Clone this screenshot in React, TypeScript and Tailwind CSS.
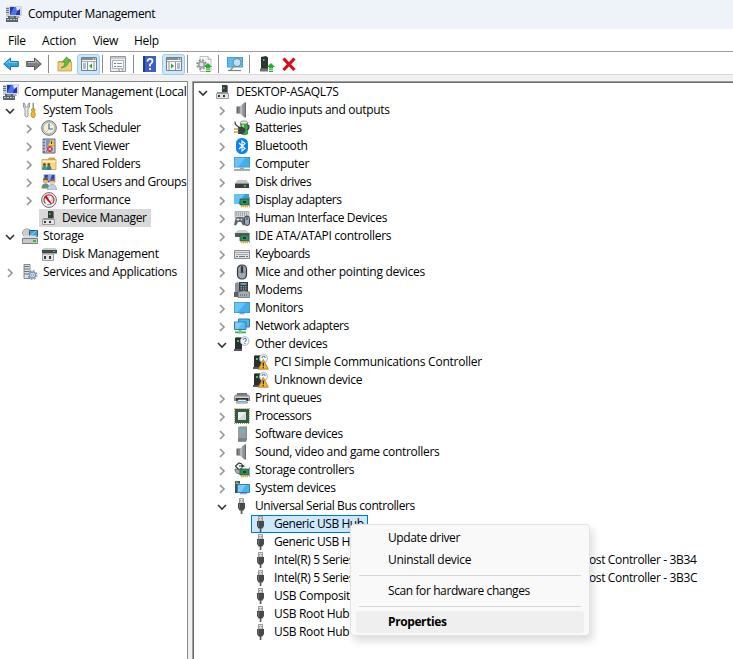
import type { ReactNode } from "react";

/* ---------- icons, all on a 16px grid ---------- */

function Svg({ children }: { children: ReactNode }) {
  return (
    <svg width="16" height="16" viewBox="0 0 16 16" className="block shrink-0">
      {children}
    </svg>
  );
}

function ComputerMgmtIcon() {
  return (
    <Svg>
      <path d="M0 1h4v10H0z" fill="#c9cdd1" />
      <path d="M0 2.5h3M0 4.5h3M0 6.5h3" stroke="#6b7176" />
      <path d="M3 0h13v10H3z" fill="#d3d5d8" />
      <path d="M4 1h10v8H4z" fill="#1f35b8" />
      <path d="M4 9l4-8h4l-2 8z" fill="#4f74e8" />
      <path d="M10 1h4v2l-3 2z" fill="#dfe8fc" />
      <path d="M8 10h5l1 2H7z" fill="#a9adb1" />
      <path d="M2 10h8v2H2zM0 12h12v4H0z" fill="#56666a" />
      <path d="M1 13.5h10" stroke="#c3cccc" strokeDasharray="2 1" />
      <path d="M4 11h4" stroke="#aab4b5" />
    </Svg>
  );
}

function ToolsIcon() {
  return (
    <Svg>
      <path d="M1.500 1v4l1.500 2v7q1.500 2 3 0V7l1.500-2V1L6 2v3H3V2z" fill="#e8eaec" stroke="#7b8288" strokeWidth=".8" />
      <path d="M10.500 1h1.500v6h-1.500z" fill="#8d9398" />
      <path d="M9.500 7h3.500v2h-.8v1l1 1v3l-1 1.500H10L9 14v-3l1.200-1V9h-.7z" fill="#f0b429" stroke="#b67b0a" strokeWidth=".6" />
    </Svg>
  );
}

function ClockIcon() {
  return (
    <Svg>
      <circle cx="8" cy="8" r="7.300" fill="#d5d6d6" stroke="#6e7276" strokeWidth="1" />
      <circle cx="8" cy="8" r="5.700" fill="#f6efda" stroke="#a9a9a5" strokeWidth=".8" />
      <path d="M8 3.500V9h4" fill="none" stroke="#3d6fa8" strokeWidth="1.200" />
      <path d="M8 9l-3 3" stroke="#c9b98a" strokeWidth=".8" />
    </Svg>
  );
}

function EventIcon() {
  return (
    <Svg>
      <path d="M2 1h12v14H2z" fill="#bccbe4" stroke="#5d6676" />
      <path d="M2 1h2v14H2z" fill="#6b7688" />
      <path d="M1 3h3M1 6h3M1 9h3M1 12h3" stroke="#d8dde5" />
      <path d="M5 3h4M5 5h3M5 7h2M5 9h1M5 13h1" stroke="#2f5fae" />
      <path d="M10.500 1.500l3.500 6H7z" fill="#ffd21f" stroke="#b58a00" strokeWidth=".5" />
      <path d="M10.500 3.500v2.500" stroke="#222" />
      <circle cx="8.800" cy="11" r="3" fill="#d9333f" />
      <path d="M7.500 9.700l2.600 2.600m0-2.600l-2.600 2.600" stroke="#fff" strokeWidth=".9" />
    </Svg>
  );
}

function SharedIcon() {
  return (
    <Svg>
      <path d="M7 3l1-1.500h6V4H7z" fill="#d7a63a" />
      <path d="M1 3.500h14v10H1z" fill="#f6dc8a" stroke="#c69a35" strokeWidth=".7" />
      <path d="M1.500 5.500h13" stroke="#fff2bd" />
      <circle cx="3.500" cy="8.500" r="1.500" fill="#6b4a2a" />
      <circle cx="7.800" cy="8.500" r="1.500" fill="#6b4a2a" />
      <path d="M1 14q0-4.500 2.500-4.500T6 14z" fill="#3c9a8f" />
      <path d="M5.500 14q0-4.500 2.500-4.500t2.500 4.500z" fill="#3a7a96" />
    </Svg>
  );
}

function UsersIcon() {
  return (
    <Svg>
      <path d="M3 .5h11v8H3z" fill="#2443c4" stroke="#b9bec9" />
      <path d="M7 1h4L9 7H6z" fill="#86a4f4" />
      <circle cx="4.500" cy="7" r="2.600" fill="#e3b98a" />
      <path d="M2 6.500q0-3 2.500-3T7 6.500q-3-1-5 0z" fill="#7b5a20" />
      <circle cx="11" cy="8" r="2.600" fill="#f0cda4" />
      <path d="M8.500 7.500q0-3 2.500-3t2.500 3q-3-1-5 0z" fill="#8a6a2a" />
      <path d="M.5 14.500q0-5 4-5t4 5z" fill="#5a9479" />
      <path d="M6.500 16q0-5.500 4.500-5.500t4.500 5.500z" fill="#c3d2e6" stroke="#6f86a8" strokeWidth=".5" />
    </Svg>
  );
}

function PerfIcon() {
  return (
    <Svg>
      <circle cx="8" cy="8" r="7.400" fill="#f3f3f3" stroke="#63686c" strokeWidth="1" />
      <path d="M4.500 11.500a5 5 0 1 1 7 0" fill="#fff" stroke="#c4272f" strokeWidth="1.200" />
      <path d="M5 4l5.500 8L4 5z" fill="#b81c25" stroke="#b81c25" strokeWidth="1.200" />
      <path d="M8 4.500V6M11 5.500v4" stroke="#8a8a8a" strokeWidth=".8" />
      <path d="M6 12.500h4" stroke="#9a9a9a" />
    </Svg>
  );
}

function DeviceIcon() {
  return (
    <Svg>
      <path d="M7 1h5v8H7z" fill="#383b3e" />
      <path d="M8 3h1.500v2H8z" fill="#32c24d" />
      <path d="M12 1.500h1V9h-1z" fill="#777b7e" />
      <path d="M2 8h11v1H2z" fill="#8d9194" />
      <path d="M1.500 9.500h12v5h-12z" fill="#e4e5e6" stroke="#9a9ea1" />
      <path d="M3 11h2v2H3zM8 11h2v2H8z" fill="#33363a" />
    </Svg>
  );
}

function StorageIcon() {
  return (
    <Svg>
      <ellipse cx="5" cy="5" rx="4.500" ry="4.200" fill="#cfd2d4" stroke="#85898c" strokeWidth=".7" />
      <circle cx="5" cy="5" r="1.200" fill="#fff" stroke="#888" strokeWidth=".5" />
      <path d="M7.500 2.500h8v6h-8z" fill="#35a6e0" stroke="#39566b" />
      <path d="M8 8l6-5" stroke="#8ad3f7" />
      <path d="M2 7.500h12l1.500 3H.5z" fill="#dadcde" />
      <path d="M.5 10.500h15v5H.5z" fill="#c6c9cb" stroke="#66696c" strokeWidth=".8" />
      <path d="M11 12h3v2h-3z" fill="#31c32d" />
    </Svg>
  );
}

function DiskMgmtIcon() {
  return (
    <Svg>
      <path d="M3 2h12l1 2H1z" fill="#c8cacc" />
      <path d="M1 4h15v3.500H1z" fill="#44484b" />
      <path d="M12 5h2v1h-2z" fill="#3ad04c" />
      <path d="M1.500 8h11v6.500h-11z" fill="#e6e7e8" stroke="#9a9ea1" />
      <path d="M3 10h2v3H3zM8 10h2v3H8z" fill="#33363a" />
    </Svg>
  );
}

function ServicesIcon() {
  return (
    <Svg>
      <path d="M2 .5h6v14H2z" fill="#d9e0e6" stroke="#66737d" strokeWidth=".8" />
      <path d="M2 2.500h5M2 5h5M2 7.500h5M2 10h4" stroke="#66737d" />
      <circle cx="10.500" cy="11" r="4.300" fill="none" stroke="#7697b5" strokeWidth="1.300" strokeDasharray="1.700 1.680" />
      <circle cx="10.500" cy="11" r="3" fill="#e8f0f8" stroke="#7697b5" strokeWidth="1.300" />
      <circle cx="10.500" cy="11" r="1.100" fill="#fff" stroke="#54779a" strokeWidth=".7" />
    </Svg>
  );
}

function SpeakerIcon() {
  return (
    <Svg>
      <path d="M2.500 4.500H6v7H2.500z" fill="#5e6266" />
      <path d="M4.500 4.500h1v7h-1z" fill="#a8acaf" />
      <path d="M6 4.500L10.500.500v15L6 11.500z" fill="#b4b8bb" />
      <path d="M8.500 2.500L10.500.500v15l-2-2z" fill="#8d9296" />
      <path d="M10.500.500h1.500v15h-1.500z" fill="#65696d" />
    </Svg>
  );
}

function BatteryIcon() {
  return (
    <Svg>
      <path d="M6.500 2.500h7V14q-3 1.500-6 0z" fill="#2fae3b" stroke="#2b6e2f" strokeWidth=".7" />
      <ellipse cx="10" cy="2.500" rx="3.800" ry="1.600" fill="#e6e8e6" stroke="#777" strokeWidth=".7" />
      <path d="M8 4.500h2v5H8z" fill="#8ee58a" />
      <path d="M13.500 5q3 1 0 5" fill="none" stroke="#39423a" strokeWidth="1.400" />
      <path d="M1 1.500q0 4.500 4.500 5.500" fill="none" stroke="#39423a" strokeWidth="1.200" />
      <path d="M4 7h5l2.500 2v2L9 14H4z" fill="#3e4144" />
      <path d="M0 9h4.500M0 12h4.500" stroke="#caa33a" strokeWidth="1.300" />
    </Svg>
  );
}

function BluetoothIcon() {
  return (
    <Svg>
      <rect x="2" y="0" width="12" height="16" rx="5.500" fill="#0a84f5" />
      <path d="M5 5l6 5.500L8 13V3l3 2.500L5 11" fill="none" stroke="#fff" strokeWidth="1.100" />
    </Svg>
  );
}

function MonitorIcon() {
  return (
    <Svg>
      <path d="M0 2h16v11H0z" fill="#3b8fc2" />
      <path d="M.7 2.700h14.600v9.600H.7z" fill="#41aef0" />
      <path d="M.7 2.700h11L4 12.300H.7z" fill="#68c3f7" />
      <path d="M5.500 13h5v1.300h-5z" fill="#9ba3a8" />
    </Svg>
  );
}

function ComputerIcon() {
  return (
    <Svg>
      <path d="M0 1h16v10.500H0z" fill="#3b8fc2" />
      <path d="M.7 1.700h14.600v9.100H.7z" fill="#41aef0" />
      <path d="M.7 1.700h11L4 10.800H.7z" fill="#68c3f7" />
      <path d="M6 11.500h4V13H6z" fill="#9ba3a8" />
      <path d="M0 14h16" stroke="#6f777d" strokeWidth="1.200" />
    </Svg>
  );
}

function DriveIcon() {
  return (
    <Svg>
      <path d="M3.500 6h9L15 9.500H1z" fill="#c2c5c7" />
      <path d="M1 9.500h14V14H1z" fill="#3c3f42" />
      <path d="M10 12h2" stroke="#42db57" strokeWidth="1.500" />
    </Svg>
  );
}

function Board() {
  return (
    <g>
      <path d="M6 7h9v6H6z" fill="#2f8f5c" stroke="#1d5a3c" strokeWidth=".8" />
      <path d="M9 9h3v2H9z" fill="#153c2b" />
      <path d="M7 14.300h7" stroke="#e0a32b" strokeWidth="2" strokeDasharray="1.500 .5" />
      <path d="M15.500 5v10" stroke="#9ea4a8" />
    </g>
  );
}

function DisplayIcon() {
  return (
    <Svg>
      <path d="M0 2h15v10H0z" fill="#3a9fdf" />
      <path d="M0 2h11L4 12H0z" fill="#67c2f6" />
      <Board />
    </Svg>
  );
}

function HidIcon() {
  return (
    <Svg>
      <path d="M1 1.500h14v6H1z" fill="#cfd3d6" stroke="#9a9fa3" strokeWidth=".7" />
      <path d="M2 3h12M2 5h12" stroke="#7b8186" strokeDasharray="1 1" />
      <path d="M0 15l1.500-7 2-1h5l1.500 1 1 7-2 .5-2-3.500H4l-2 3.500z" fill="#5f686f" />
      <path d="M2.500 9.500h3M4 8v3" stroke="#d5dade" />
      <circle cx="7.500" cy="9.500" r="1" fill="#cbd3d8" />
      <rect x="10.500" y="6" width="5" height="9.500" rx="2.500" fill="#9aa9b5" stroke="#38424a" />
      <path d="M13 6.500V10" stroke="#38424a" />
    </Svg>
  );
}

function IdeIcon() {
  return (
    <Svg>
      <path d="M4 2h8l3 3H1z" fill="#cfd1d3" />
      <path d="M1 5h14v4H1z" fill="#55595d" />
      <Board />
    </Svg>
  );
}

function KeyboardIcon() {
  return (
    <Svg>
      <path d="M.5 4.500h15v8H.5z" fill="#dfe2e4" stroke="#7b8186" strokeWidth=".9" />
      <path d="M1.500 6.500h13M2.500 8.500h12" stroke="#697077" strokeDasharray="1 1" />
      <path d="M2 10.500h2M5 10.500h6M12 10.500h2" stroke="#697077" />
    </Svg>
  );
}

function MouseIcon() {
  return (
    <Svg>
      <rect x="3.500" y="1" width="9" height="14" rx="4.300" fill="#9faab4" stroke="#32383d" strokeWidth="1.200" />
      <path d="M4 7.500q4 3 8 0" fill="none" stroke="#717c86" strokeWidth=".8" />
      <rect x="6.800" y="2" width="2.400" height="7" rx="1.200" fill="#343a40" />
    </Svg>
  );
}

function ModemIcon() {
  return (
    <Svg>
      <path d="M1 1l3-1 1 2v12H1z" fill="#8c9297" />
      <path d="M5 0h9v10H5z" fill="#363b40" />
      <path d="M6.500 2h6" stroke="#6fc2f0" strokeWidth="1.500" />
      <path d="M6.500 4.800h6M6.500 7h6" stroke="#b9c0c5" strokeDasharray="1.500 .8" />
      <path d="M0 10h4v5H0z" fill="#5a5f63" />
      <path d="M4 10q6-2.500 11.500 0v5.500H4z" fill="#a7adb2" stroke="#5d6267" strokeWidth=".7" />
      <path d="M6 13h8" stroke="#4b5055" strokeDasharray="1 1" />
    </Svg>
  );
}

function NetworkIcon() {
  return (
    <Svg>
      <path d="M4.500 1h11v8h-11z" fill="#4db6f2" stroke="#3479a5" />
      <path d="M.5 4h11.500v7.500H.5z" fill="#55bbf4" stroke="#3479a5" />
      <path d="M1 4.500h8L4 11H1z" fill="#7ccdfa" />
      <path d="M6 12v2M1 14.300h11" stroke="#3ab54a" strokeWidth="1.800" />
      <path d="M4.500 12.500h3.500v3H4.500z" fill="#6ed07a" />
    </Svg>
  );
}

function Tower() {
  return (
    <g>
      <path d="M1 2h7v11H1z" fill="#2c2f32" />
      <path d="M1.500 1h6v1h-6z" fill="#75797c" />
      <path d="M3 4h2v2H3z" fill="#35d04b" />
      <path d="M0 13h8v2H0z" fill="#54585b" />
    </g>
  );
}

function OtherIcon() {
  return (
    <Svg>
      <Tower />
      <circle cx="10.700" cy="5" r="4.300" fill="#f6f7f8" stroke="#a6abb0" strokeWidth=".9" />
      <path d="M9.200 4q.2-1.700 1.700-1.700T12.400 4q0 .8-1.500 1.600v.7M10.900 7v1" fill="none" stroke="#2878c8" />
    </Svg>
  );
}

function WarnIcon() {
  return (
    <Svg>
      <Tower />
      <circle cx="10.500" cy="4.500" r="4" fill="#f6f7f8" stroke="#a6abb0" strokeWidth=".9" />
      <path d="M9 4q.2-1.700 1.700-1.700T12.200 4" fill="none" stroke="#2878c8" />
      <path d="M10.300 5.500l5 9.700H5.300z" fill="#f9b529" stroke="#b3700b" strokeWidth=".8" />
      <path d="M10.300 8.500V12M10.300 12.800v1.400" stroke="#1d1d1d" strokeWidth="1.200" />
    </Svg>
  );
}

function PrinterIcon() {
  return (
    <Svg>
      <path d="M3 3h10v3H3z" fill="#6d7275" />
      <path d="M0 6.500L2 4.500h12l2 2V11H0z" fill="#85898c" />
      <path d="M1 6.500h14V8H1z" fill="#d0d3d5" />
      <path d="M2 8h12v3H2z" fill="#303336" />
      <path d="M4 9.500h8l1.500 3.500h-11z" fill="#e9f1f7" stroke="#51565a" strokeWidth=".7" />
      <path d="M4 11.500h8" stroke="#68acd6" />
    </Svg>
  );
}

function CpuIcon() {
  return (
    <Svg>
      <rect x=".6" y=".6" width="14.800" height="14.800" fill="none" stroke="#b89845" strokeWidth="1.200" strokeDasharray="1 1" />
      <path d="M1 1h14v14H1z" fill="#2f5e48" />
      <path d="M4 4h8v8H4z" fill="#d5d8d7" />
      <path d="M4 4h8l-8 8z" fill="#eceeed" />
    </Svg>
  );
}

function SoftwareIcon() {
  return (
    <Svg>
      <path d="M4 1.500L5 .5h8V14l-1 1.500H4z" fill="#82898f" />
      <path d="M4 1.500h8v14H4z" fill="#969da3" />
      <path d="M4 12h8v3.500H4z" fill="#7b8288" />
      <circle cx="8.300" cy="5.500" r="1.200" fill="#45c6ee" />
    </Svg>
  );
}

function StorageCtlIcon() {
  return (
    <Svg>
      <path d="M8 2L5 1 1.500 4l3 3.500 3.500-1M5 4h4.500L7.500 2.500M9.500 4l-2 1.500" fill="none" stroke="#33373a" strokeWidth="1.200" />
      <path d="M1 7q0 5 5 5l1-4z" fill="#a5abaf" stroke="#5b6064" strokeWidth=".8" />
      <Board />
    </Svg>
  );
}

function SystemIcon() {
  return (
    <Svg>
      <path d="M1 1h5v12H1z" fill="#4b5054" />
      <path d="M1.500 3.500h4" stroke="#999fa3" />
      <path d="M2 1.500h1.500V3H2z" fill="#3ed454" />
      <path d="M3.500 4.500h12v8h-12z" fill="#48b4f2" stroke="#2f7fb3" />
      <path d="M4 5h8l-5 7H4z" fill="#7bccf9" />
      <path d="M6 13.700h7" stroke="#8c9398" />
    </Svg>
  );
}

function UsbIcon() {
  return (
    <Svg>
      <path d="M5.500.5h4V5h-4z" fill="#e3e3e3" stroke="#858585" strokeWidth=".8" />
      <path d="M6.300 2h.8v1.200h-.8zM7.900 2h.8v1.200h-.8z" fill="#777" />
      <path d="M4 5h7v5l-1.500 2.500h-4L4 10z" fill="#47494b" />
      <path d="M5.500 5.500v5" stroke="#77797b" strokeWidth=".8" />
      <path d="M6.700 12h1.700v4H6.700z" fill="#55585a" />
    </Svg>
  );
}

/* ---------- toolbar ---------- */

function ArrowIcon({ fill, stroke, flip }: { fill: string; stroke: string; flip?: boolean }) {
  return (
    <Svg>
      <g transform={flip ? "matrix(-1 0 0 1 16 0)" : undefined}>
        <path d="M.7 8l6.800-6v3.500h7.800v5H7.500V14z" fill={fill} stroke={stroke} strokeLinejoin="round" />
        <path d="M3 7.500l3.500-3v2H14" fill="none" stroke="#fff" strokeOpacity=".45" />
      </g>
    </Svg>
  );
}

function FolderUpIcon() {
  return (
    <Svg>
      <path d="M1 5h5l1-2h7v12H1z" fill="#dda94a" />
      <path d="M1 6h13.500v9H1z" fill="#f0cc7e" stroke="#c08c31" strokeWidth=".7" />
      <path d="M4 12q4-1 4-6H5.500l4-5 4.500 4h-2.500q0 6-7.500 7z" fill="#5fc043" stroke="#2f8c25" strokeWidth=".6" />
    </Svg>
  );
}

function PaneIcon({ flip }: { flip?: boolean }) {
  return (
    <Svg>
      <path d="M.5 1.500h15v13H.5z" fill="#f7f8f9" stroke="#7a8087" />
      <path d="M1 3h14" stroke="#858c93" strokeWidth="2" />
      <path d="M12 3h1M14 3h1" stroke="#fff" />
      <path d="M1 5.500h14" stroke="#a3a9ae" />
      <g transform={flip ? "matrix(-1 0 0 1 16 0)" : undefined}>
        <path d="M6.500 6v8M13 6v8" stroke="#8d949a" />
        <path d="M2 8h3M2 10h3M2 12h3" stroke="#5f80a8" />
        <path d="M11 7.500v5L8 10z" fill="#35a32b" />
      </g>
    </Svg>
  );
}

function PropsIcon() {
  return (
    <Svg>
      <path d="M.5.5h15v15H.5z" fill="#eceef0" stroke="#92989d" />
      <path d="M1 2h14" stroke="#b8bec4" strokeWidth="1.500" />
      <path d="M2.500 4.500h11v8h-11z" fill="#fff" stroke="#9ba2a9" strokeWidth=".8" />
      <path d="M4 7.500h2M4 10.500h2" stroke="#5684b4" />
      <path d="M7 7.500h5M7 10.500h5" stroke="#8b9197" />
      <path d="M8 14h2M11.500 14h2" stroke="#7f868c" />
    </Svg>
  );
}

function HelpIcon() {
  return (
    <Svg>
      <path d="M2 0h13v16H2z" fill="#3b5fc4" />
      <path d="M2 0h2v16H2z" fill="#1f3a8c" />
      <path d="M6.500 5.500q0-2.700 2.500-2.700t2.500 2.400Q11.500 7 9 8.500v2M9 12v2" fill="none" stroke="#fff" strokeWidth="1.700" />
    </Svg>
  );
}

function UpArrow() {
  return <path d="M12 7l4 4h-2v1.500h-4V11H8zM10 13.300h4v1h-4zM10 15h4v1h-4z" fill="#26ad32" />;
}

function GearUpIcon() {
  return (
    <Svg>
      <path d="M4 .5h8l3 3v12H4z" fill="#f7f7f7" stroke="#aeb2b5" strokeWidth=".8" />
      <path d="M12 .5v3h3" fill="#ddd" stroke="#aeb2b5" strokeWidth=".8" />
      <circle cx="5.500" cy="8.500" r="4.300" fill="none" stroke="#8e9498" strokeWidth="2" strokeDasharray="2 1.375" />
      <circle cx="5.500" cy="8.500" r="2.800" fill="#e1e3e5" stroke="#969ca0" strokeWidth="1.500" />
      <UpArrow />
    </Svg>
  );
}

function ScanIcon() {
  return (
    <Svg>
      <path d="M0 1h16v10.500H0z" fill="#3795cc" />
      <path d="M.7 1.700h14.600v9.100H.7z" fill="#5dbcf2" />
      <path d="M1 14.500h13" stroke="#7c8388" strokeWidth="1.200" />
      <path d="M7.500 9.500L3.500 14" stroke="#8d9397" strokeWidth="1.600" />
      <circle cx="10" cy="6.500" r="4" fill="#b9e3fb" stroke="#768089" />
    </Svg>
  );
}

function UpdateIcon() {
  return (
    <Svg>
      <path d="M2 1l5-1 2 1.500V13H2z" fill="#303336" />
      <path d="M4 3h1.500v2H4z" fill="#39d24e" />
      <path d="M1 12.500h8v3H1z" fill="#707477" />
      <UpArrow />
    </Svg>
  );
}

function DeleteIcon() {
  return (
    <Svg>
      <path d="M2.500 2.500L13.500 14M13.500 2.500L2.500 14" stroke="#d90d15" strokeWidth="3.200" />
    </Svg>
  );
}

function Separator() {
  return <div className="h-[18px] w-px bg-[#8c8c8c]" />;
}

function ToggledButton({ children }: { children: ReactNode }) {
  return (
    <div className="flex h-[21px] w-[23px] items-center justify-center rounded-[3px] border border-[#99cdf3] bg-[#cce7fb]">
      {children}
    </div>
  );
}

function Toolbar() {
  return (
    <div className="flex h-[23px] items-center border-b border-[#d9d9d9] bg-white pt-[2px] pl-[3px]">
      <ArrowIcon fill="#2aa5e8" stroke="#1878b8" />
      <div className="w-[7px]" />
      <ArrowIcon fill="#7d8184" stroke="#56595c" flip />
      <div className="w-[6px]" />
      <Separator />
      <div className="w-[8px]" />
      <FolderUpIcon />
      <div className="w-[4px]" />
      <ToggledButton>
        <PaneIcon />
      </ToggledButton>
      <div className="w-[2px]" />
      <Separator />
      <div className="w-[7px]" />
      <PropsIcon />
      <div className="w-[7px]" />
      <Separator />
      <div className="w-[7px]" />
      <HelpIcon />
      <div className="w-[5px]" />
      <ToggledButton>
        <PaneIcon flip />
      </ToggledButton>
      <div className="w-[2px]" />
      <Separator />
      <div className="w-[8px]" />
      <GearUpIcon />
      <div className="w-[6px]" />
      <Separator />
      <div className="w-[8px]" />
      <ScanIcon />
      <div className="w-[6px]" />
      <Separator />
      <div className="w-[9px]" />
      <UpdateIcon />
      <div className="w-[6px]" />
      <DeleteIcon />
    </div>
  );
}

/* ---------- trees ---------- */

type Expand = "open" | "closed" | "none";

type TreeNode = {
  label: string;
  icon: ReactNode;
  expand?: Expand;
  level?: number;
  selected?: "gray" | "blue";
  tracking?: string;
};

function Chevron({ state }: { state: Expand }) {
  return (
    <svg width="10" height="10" viewBox="0 0 10 10" className="mt-[2px] block shrink-0">
      {state === "open" && <path d="M1 3l4 4 4-4" fill="none" stroke="#333" strokeWidth="1.600" />}
      {state === "closed" && <path d="M3 1l4 4-4 4" fill="none" stroke="#949494" strokeWidth="1.600" />}
    </svg>
  );
}

const indents = ["pl-0", "pl-[19px]", "pl-[38px]"];

const highlights = {
  gray: "bg-[#d9d9d9]",
  blue: "bg-[#cce8ff] outline outline-1 -outline-offset-1 outline-[#0078d7]",
};

function TreeRow({ node }: { node: TreeNode }) {
  const { label, icon, expand = "closed", level = 0, selected, tracking = "" } = node;
  return (
    <div className={`flex h-[18px] items-center ${indents[level]}`}>
      <Chevron state={expand} />
      <div
        className={`ml-[5px] flex h-[18px] items-center gap-[5px] pr-[4px] pl-[2px] whitespace-nowrap ${selected ? highlights[selected] : ""}`}
      >
        {icon}
        <span className={tracking}>{label}</span>
      </div>
    </div>
  );
}

const leftNodes: TreeNode[] = [
  { label: "System Tools", icon: <ToolsIcon />, expand: "open" },
  { label: "Task Scheduler", icon: <ClockIcon />, level: 1, tracking: "tracking-[-0.4px]" },
  { label: "Event Viewer", icon: <EventIcon />, level: 1, tracking: "tracking-[-0.4px]" },
  { label: "Shared Folders", icon: <SharedIcon />, level: 1, tracking: "tracking-[-0.4px]" },
  { label: "Local Users and Groups", icon: <UsersIcon />, level: 1, tracking: "tracking-[-0.38px]" },
  { label: "Performance", icon: <PerfIcon />, level: 1, tracking: "tracking-[-0.4px]" },
  { label: "Device Manager", icon: <DeviceIcon />, expand: "none", level: 1, selected: "gray", tracking: "tracking-[-0.37px]" },
  { label: "Storage", icon: <StorageIcon />, expand: "open" },
  { label: "Disk Management", icon: <DiskMgmtIcon />, expand: "none", level: 1 },
  { label: "Services and Applications", icon: <ServicesIcon /> },
];

const rightNodes: TreeNode[] = [
  { label: "DESKTOP-ASAQL7S", icon: <DeviceIcon />, expand: "open" },
  { label: "Audio inputs and outputs", icon: <SpeakerIcon />, level: 1 },
  { label: "Batteries", icon: <BatteryIcon />, level: 1, tracking: "tracking-[-0.4px]" },
  { label: "Bluetooth", icon: <BluetoothIcon />, level: 1 },
  { label: "Computer", icon: <ComputerIcon />, level: 1 },
  { label: "Disk drives", icon: <DriveIcon />, level: 1, tracking: "tracking-[-0.4px]" },
  { label: "Display adapters", icon: <DisplayIcon />, level: 1, tracking: "tracking-[-0.42px]" },
  { label: "Human Interface Devices", icon: <HidIcon />, level: 1, tracking: "tracking-[-0.35px]" },
  { label: "IDE ATA/ATAPI controllers", icon: <IdeIcon />, level: 1 },
  { label: "Keyboards", icon: <KeyboardIcon />, level: 1, tracking: "tracking-[-0.5px]" },
  { label: "Mice and other pointing devices", icon: <MouseIcon />, level: 1, tracking: "tracking-[-0.26px]" },
  { label: "Modems", icon: <ModemIcon />, level: 1 },
  { label: "Monitors", icon: <MonitorIcon />, level: 1 },
  { label: "Network adapters", icon: <NetworkIcon />, level: 1, tracking: "tracking-[-0.42px]" },
  { label: "Other devices", icon: <OtherIcon />, expand: "open", level: 1, tracking: "tracking-[-0.37px]" },
  { label: "PCI Simple Communications Controller", icon: <WarnIcon />, expand: "none", level: 2, tracking: "tracking-[-0.23px]" },
  { label: "Unknown device", icon: <WarnIcon />, expand: "none", level: 2 },
  { label: "Print queues", icon: <PrinterIcon />, level: 1, tracking: "tracking-[-0.4px]" },
  { label: "Processors", icon: <CpuIcon />, level: 1, tracking: "tracking-[-0.5px]" },
  { label: "Software devices", icon: <SoftwareIcon />, level: 1, tracking: "tracking-[-0.4px]" },
  { label: "Sound, video and game controllers", icon: <SpeakerIcon />, level: 1 },
  { label: "Storage controllers", icon: <StorageCtlIcon />, level: 1, tracking: "tracking-[-0.37px]" },
  { label: "System devices", icon: <SystemIcon />, level: 1 },
  { label: "Universal Serial Bus controllers", icon: <UsbIcon />, expand: "open", level: 1, tracking: "tracking-[-0.43px]" },
  { label: "Generic USB Hub", icon: <UsbIcon />, expand: "none", level: 2, selected: "blue", tracking: "tracking-[-0.43px]" },
  { label: "Generic USB Hub", icon: <UsbIcon />, expand: "none", level: 2, tracking: "tracking-[-0.43px]" },
  { label: "Intel(R) 5 Series/3400 Series Chipset Family USB Enhanced Host Controller - 3B34", icon: <UsbIcon />, expand: "none", level: 2, tracking: "tracking-[-0.35px]" },
  { label: "Intel(R) 5 Series/3400 Series Chipset Family USB Enhanced Host Controller - 3B3C", icon: <UsbIcon />, expand: "none", level: 2, tracking: "tracking-[-0.35px]" },
  { label: "USB Composite Device", icon: <UsbIcon />, expand: "none", level: 2 },
  { label: "USB Root Hub", icon: <UsbIcon />, expand: "none", level: 2 },
  { label: "USB Root Hub", icon: <UsbIcon />, expand: "none", level: 2 },
];

function ContextMenu() {
  return (
    <div className="absolute top-[524px] left-[350px] h-[112px] w-[240px] rounded-[4px] border border-[#e3e3e3] bg-[#f9f9f9] pt-[2px] shadow-[3px_5px_9px_rgba(0,0,0,0.14)]">
      <div className="flex h-[22px] items-center pl-[37px] tracking-[-0.4px]">Update driver</div>
      <div className="flex h-[22px] items-center pl-[37px]">Uninstall device</div>
      <div className="mx-[8px] my-[4px] h-px bg-[#d5d5d5]" />
      <div className="flex h-[22px] items-center pl-[37px] tracking-[-0.4px]">Scan for hardware changes</div>
      <div className="mx-[8px] my-[4px] h-px bg-[#d5d5d5]" />
      <div className="mx-[5px] flex h-[22px] items-center rounded-[3px] bg-[#efefef] pl-[32px] font-bold tracking-[-0.4px]">
        Properties
      </div>
    </div>
  );
}

export default function App() {
  return (
    <div className="relative flex h-[659px] w-[733px] flex-col overflow-hidden bg-[#f0f0f0] font-['Open_Sans','Noto_Sans',sans-serif] text-[12px] leading-[16px] tracking-[-0.3px] text-black">
      <div className="flex h-[29px] items-center gap-[6px] bg-[#eef2f9] pb-[2px] pl-[6px]">
        <ComputerMgmtIcon />
        <span className="pt-px tracking-[-0.35px]">Computer Management</span>
      </div>
      <div className="flex h-[23px] items-center border-b border-[#a0a0a0] bg-white pt-px pl-[8px]">
        <span className="w-[34px]">File</span>
        <span className="w-[51px] tracking-[-0.15px]">Action</span>
        <span className="w-[41px]">View</span>
        <span>Help</span>
      </div>
      <Toolbar />
      <div className="flex min-h-0 flex-1 pt-[6px]">
        <div className="w-[188px] shrink-0 overflow-hidden border-t border-r border-[#828790] bg-white pt-px pl-[3px]">
          <div className="flex h-[18px] items-center gap-[5px] whitespace-nowrap">
            <ComputerMgmtIcon />
            <span className="tracking-[-0.27px]">Computer Management (Local</span>
          </div>
          <div className="pl-[2px]">
            {leftNodes.map((node) => (
              <TreeRow key={node.label} node={node} />
            ))}
          </div>
        </div>
        <div className="ml-[4px] flex-1 overflow-hidden border-t border-l border-[#a0a0a0] bg-white">
          <div className="h-full border-t border-l border-[#696969] pl-[4px]">
            {rightNodes.map((node, i) => (
              <TreeRow key={i} node={node} />
            ))}
          </div>
        </div>
      </div>
      <ContextMenu />
    </div>
  );
}
